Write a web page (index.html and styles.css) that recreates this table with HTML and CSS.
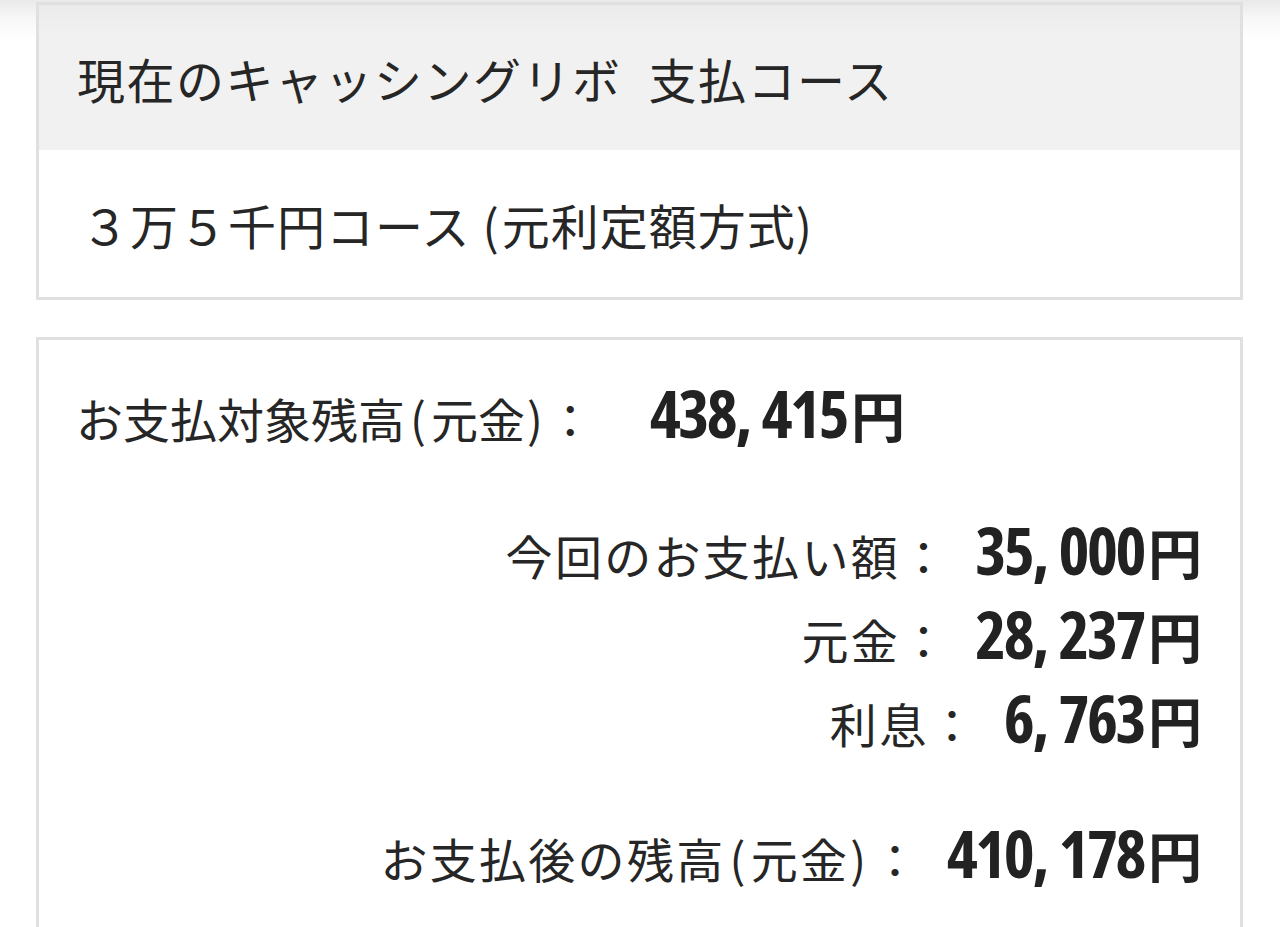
FILE: index.html
```html
<!DOCTYPE html>
<html lang="ja">
<head>
<meta charset="utf-8">
<title>キャッシングリボ 支払コース</title>
<link rel="stylesheet" href="styles.css">
</head>
<body>
<div class="page">
  <section class="box course">
    <div class="box-head">現在のキャッシングリボ<span class="sp"> </span>支払コース</div>
    <div class="box-body">３万５千円コース<span class="po">(</span>元利定額方式<span class="pc">)</span></div>
  </section>

  <section class="box detail">
    <div class="row-first">
      <span class="label">お支払対象残高<span class="po">(</span>元金<span class="pc">)</span>：</span><span class="val first-val"><span class="num">438<span class="comma">,</span>415</span><span class="yen">円</span></span>
    </div>
    <div class="row right r-pay">
      <span class="label">今回のお支払い額：</span><span class="val"><span class="num">35<span class="comma">,</span>000</span><span class="yen">円</span></span>
    </div>
    <div class="row right">
      <span class="label">元金：</span><span class="val"><span class="num">28<span class="comma">,</span>237</span><span class="yen">円</span></span>
    </div>
    <div class="row right">
      <span class="label">利息：</span><span class="val"><span class="num">6<span class="comma">,</span>763</span><span class="yen">円</span></span>
    </div>
    <div class="row right r-after">
      <span class="label">お支払後の残高<span class="po">(</span>元金<span class="pc">)</span>：</span><span class="val"><span class="num">410<span class="comma">,</span>178</span><span class="yen">円</span></span>
    </div>
  </section>
</div>
</body>
</html>
```

FILE: styles.css
```css
html, body {
  margin: 0;
  padding: 0;
}
body {
  background: linear-gradient(#e9e9e9 0px, #f7f7f7 18px, #ffffff 40px) no-repeat;
  background-color: #ffffff;
  font-family: "Noto Sans CJK JP", "Noto Sans", sans-serif;
  color: #262626;
  height: 927px;
  overflow: hidden;
}
.page {
  padding: 2px 37px 0 36px;
}
.box {
  border: 3px solid #e0e0e0;
  background: #ffffff;
}
.course {
  height: 298px;
  box-sizing: border-box;
  display: flex;
  flex-direction: column;
}
.box-head {
  height: 145px;
  background: linear-gradient(#ebebeb 0px, #f1f1f1 30px, #f1f1f1 100%);
  display: flex;
  align-items: center;
  padding-left: 38px;
  font-size: 48px;
  letter-spacing: 1.5px;
  line-height: 1;
}
.sp {
  display: inline-block;
  width: 27px;
}
.box-body {
  flex: 1;
  display: flex;
  align-items: center;
  padding-left: 42px;
  font-size: 48px;
  letter-spacing: 1px;
  line-height: 1;
}
.box-body .po {
  margin: 0 2px 0 12px;
}
.box-body .pc {
  margin-left: 0;
}
.detail {
  margin-top: 37px;
  height: 700px;
  padding-top: 42px;
}
.label {
  font-size: 47px;
}
.label .po {
  margin: 0 5px 0 5px;
}
.label .pc {
  margin: 0 4px 0 2px;
}
.right .label {
  letter-spacing: 2.3px;
}
.right .label .po {
  margin: 0 3px 0 4px;
}
.right .label .pc {
  margin: 0 3px 0 1px;
}
.row-first {
  padding-left: 37px;
  height: 60px;
  line-height: 60px;
  white-space: nowrap;
}
.row-first .val.first-val {
  margin-left: 56px;
}
.row {
  height: 84px;
  line-height: 84px;
  white-space: nowrap;
}
.right {
  text-align: right;
  padding-right: 38px;
}
.r-pay {
  margin-top: 65px;
}
.r-after {
  margin-top: 51px;
}
.val {
  margin-left: 26px;
}
.num {
  font-family: "Open Sans", "Roboto", sans-serif;
  font-weight: 700;
  font-stretch: 75%;
  font-size: 66px;
  letter-spacing: -2.5px;
  color: #222222;
}
.comma {
  margin-right: 12px;
}
.yen {
  font-family: "Noto Sans CJK JP", sans-serif;
  font-weight: 700;
  font-size: 54px;
  margin-left: 4px;
  color: #222222;
}
```
